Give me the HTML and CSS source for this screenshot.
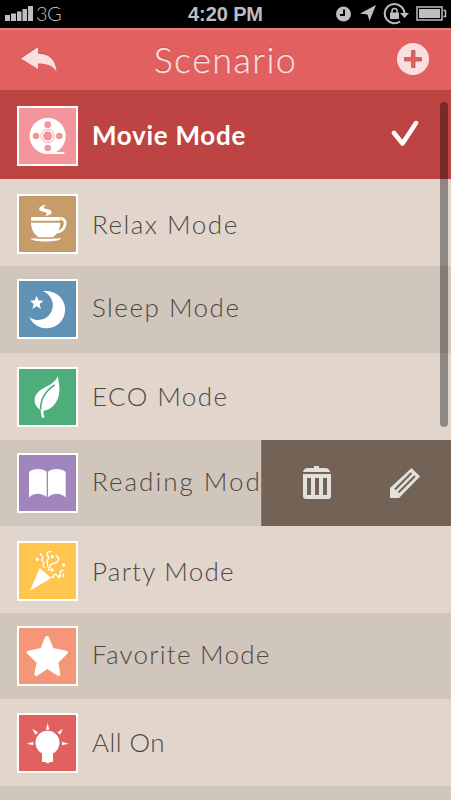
FILE: index.html
```html
<!DOCTYPE html>
<html lang="en">
<head>
    <meta charset="UTF-8">
    <meta name="viewport" content="width=device-width, initial-scale=1.0">
    <title>Scenario</title>
    <link rel="stylesheet" href="styles.css">
</head>
<body>

    <div class="status-bar">
        <svg class="signal" viewBox="0 0 28 16" width="28" height="16">
            <path d="M0 9h5v6H0zM6 7.500h5V15H6zM12 5.500h4.500V15H12zM17.500 3h4.500v12h-4.500zM23 0h5v15h-5z"/>
        </svg>
        <span class="network">3G</span>
        <span class="time">4:20 PM</span>
        <svg class="status-icons" viewBox="0 0 112 24" width="112" height="24">
            <circle cx="7.500" cy="12" r="7.500"/>
            <path class="cut" d="M8 7.500v5.500H4"/>
            <path d="M40 3L33.500 19 31.500 12.500 24 11.500z"/>
            <path class="line" d="M64 19.500A9.700 9.700 0 1 1 65 4.500A9.500 9.500 0 0 1 68.500 11"/>
            <path d="M64 11h9l-4.500 5zM54 10.500h9v6.500h-9z"/>
            <path class="line thin" d="M56 11V9a2.500 2.500 0 0 1 5 0v2"/>
            <path class="line thin" d="M81 5h25v13H81zM107.500 8.500h2v6h-2"/>
            <path d="M83 7h21v9H83z"/>
        </svg>
    </div>

    <header class="header">
        <svg class="back" viewBox="0 0 36 25" width="36" height="25">
            <path d="M0 11.500L17 0v6.500C28 7 34.500 12 35.500 24.500C32 18.500 26 16.500 17 16.500v5.500z"/>
        </svg>
        <h1>Scenario</h1>
        <svg class="add" viewBox="0 0 32 32" width="32" height="32">
            <circle cx="16" cy="16" r="16"/>
            <path d="M14.500 7.500h3.500V14.500h6.500v3.500H18v6.500h-3.500V18H7.500v-3.500h7z"/>
        </svg>
    </header>

    <main class="list">
        <div class="row selected">
            <svg class="tile movie" viewBox="0 0 183 180">
                <circle cx="92" cy="90" r="54"/>
                <path d="M92 144v-8l30 2h20v6z"/>
                <g class="hole">
                    <circle cx="92" cy="56" r="10"/>
                    <circle cx="57" cy="90" r="10"/>
                    <circle cx="127" cy="90" r="10"/>
                    <circle cx="92" cy="126" r="10"/>
                    <circle cx="92" cy="90" r="14"/>
                </g>
                <circle class="ring" cx="92" cy="90" r="20"/>
            </svg>
            <span class="label">Movie Mode</span>
            <svg class="check" viewBox="0 0 28 27" width="28" height="27">
                <path d="M3 13l8.500 10.500L25 3"/>
            </svg>
        </div>
        <div class="row relax">
            <svg class="tile" viewBox="0 0 183 180">
                <path d="M42 69h88v11H42zM42 86h88c0 20-11 37-24 44H66C53 123 42 106 42 86zM41 133c14 2 77 2 91 0c-1 13-90 13-91 0z"/>
                <path class="stroke" stroke-width="8" d="M131 74c20-3 20 36-14 41"/>
                <path d="M88 32c-24 2-29 17-10 21c12 2 14 5 6 13c22-2 28-15 9-20c-14-3-17-6-5-14z"/>
            </svg>
            <span class="label">Relax Mode</span>
        </div>
        <div class="row dark sleep">
            <svg class="tile" viewBox="0 0 183 180">
                <path d="M77 37A56 56 0 1 1 37 114A44 44 0 1 0 77 37z"/>
                <path d="M59 51l6 13 14 1-11 10 4 15-13-8-13 8 4-15-11-10 14-1z"/>
            </svg>
            <span class="label">Sleep Mode</span>
        </div>
        <div class="row eco">
            <svg class="tile" viewBox="0 0 183 180">
                <path d="M122 28C127 55 133 80 117 106C108 121 95 129 80 131C79 139 80 146 83 151L76 153C73 145 71 138 71 129C48 117 47 89 66 73C84 58 111 54 122 28z"/>
                <path class="vein" d="M71 128C70 101 83 72 113 54"/>
            </svg>
            <span class="label">ECO Mode</span>
        </div>
        <div class="row dark reading">
            <svg class="tile" viewBox="0 0 183 180">
                <path d="M36 57C47 46 76 45 89 56v77C77 120 50 118 36 134zM93 56c13-11 42-10 53 1v77C132 118 105 120 93 133z"/>
            </svg>
            <span class="label">Reading Mode</span>
            <div class="actions">
                <svg class="trash" viewBox="0 0 28 33" width="28" height="33">
                    <path d="M11 0h5v2h6c3 0 5 2 5 4H0c0-2 2-4 5-4h6z"/>
                    <path fill-rule="evenodd" d="M0 8h28v22q0 3-3 3H3q-3 0-3-3zM4 12v17h4V12zM12 12v17h4V12zM20 12v17h4V12z"/>
                </svg>
                <svg class="pencil" viewBox="0 0 30 30" width="30" height="30">
                    <path d="M21.500 0L30 8.500 9 30H0V20z"/>
                    <path class="groove" d="M5 21.500L21.500 5M8.500 24.500L25 8"/>
                </svg>
            </div>
        </div>
        <div class="row party">
            <svg class="tile" viewBox="0 0 183 180">
                <path d="M68 81l35 30-64 38z"/>
                <g class="stroke" stroke-width="4">
                    <path d="M71 36c-5 8 12 8 5 17s10 10 4 18s6 6 5 10"/>
                    <path d="M104 32c-16-2-18 7-11 14s-5 10-3 17s4 8 1 15"/>
                    <path d="M116 43c14 8 10 19-3 23s-18 11-17 23"/>
                    <path d="M139 90c-8-4-12 2-9 10s-8 7-11 2s-8-2-9 5s-7-1-8 0"/>
                    <path d="M139 97v12"/>
                </g>
                <circle cx="61" cy="55" r="5"/>
                <circle cx="106" cy="47" r="5"/>
                <circle cx="140" cy="72" r="5"/>
                <circle cx="105" cy="87" r="5"/>
                <circle cx="126" cy="107" r="5"/>
            </svg>
            <span class="label">Party Mode</span>
        </div>
        <div class="row dark favorite">
            <svg class="tile" viewBox="0 0 183 180">
                <path d="M84 34q6-8 12 0l13 32 39 8q8 2 3 9l-27 27 6 34q0 8-8 5l-31-20-30 20q-9 3-9-5l7-34-28-27q-5-7 3-9l37-8z"/>
            </svg>
            <span class="label">Favorite Mode</span>
        </div>
        <div class="row all-on">
            <svg class="tile" viewBox="0 0 183 180">
                <path d="M75 121A36 36 0 1 1 108 121V147h-9q-7 8-14 0h-10z"/>
                <path d="M92 30l5 20H87zM46 47l17 11-8 7zM138 47l-9 18-8-7zM29 92l20-6v11zM155 92l-20-6v11z"/>
            </svg>
            <span class="label">All On</span>
        </div>
        <div class="row dark last"></div>
        <div class="scrollbar"></div>
    </main>

</body>
</html>
```
FILE: styles.css
```css
body {
    margin: 0;
    background: #e2d6cc;
    font-family: Lato, "Open Sans", sans-serif;
    font-weight: 300;
    color: #4f4843;
}

svg {
    display: block;
    flex: none;
}

/* status bar */
.status-bar {
    display: grid;
    grid-template-columns: 36px 1fr auto 1fr;
    align-items: start;
    height: 28px;
    background: #000;
    color: #bebebe;
    fill: #bebebe;
}

.signal {
    margin: 6px 0 0 5px;
}

.network {
    font-size: 20px;
    line-height: 27px;
    letter-spacing: -0.5px;
}

.time {
    font: bold 20px/28px "Liberation Sans", Arial, sans-serif;
    margin-left: -36px;
    letter-spacing: -0.1px;
}

.status-icons {
    justify-self: end;
    margin: 2px 3px 0 0;
}

.status-icons .cut {
    fill: none;
    stroke: #000;
    stroke-width: 2;
}

.status-icons .line {
    fill: none;
    stroke: #bebebe;
    stroke-width: 2;
}

.status-icons .thin {
    stroke-width: 1.5;
}

/* header */
.header {
    display: flex;
    align-items: flex-start;
    justify-content: space-between;
    box-sizing: border-box;
    height: 62px;
    padding: 0 22px 0 21px;
    background: #e26060;
    border-top: 2px solid #e77b79;
    fill: #f9dfdf;
}

.header h1 {
    margin: 0 0 0 -3px;
    font-size: 36px;
    font-weight: 300;
    line-height: 58px;
    letter-spacing: 1.4px;
    color: #f9dfdf;
    -webkit-text-stroke: 0.3px #f9dfdf;
    text-shadow: 0 -1px 1px rgba(130, 30, 30, 0.4);
}

.back {
    margin-top: 17px;
    filter: drop-shadow(0 -1px 0 rgba(150, 40, 40, 0.35));
}

.add {
    margin-top: 13px;
}

.add path {
    fill: #dc6262;
    stroke: #b64d4d;
    stroke-width: 0.7;
}

/* list */
.list {
    position: relative;
}

.row {
    display: flex;
    align-items: flex-start;
    position: relative;
    box-sizing: border-box;
    height: 87px;
    padding: 15px 0 0 17px;
    background: #e2d6cc;
    --tile: #c69c6b;
}

.row.dark {
    background: #d1c6bb;
}

.row.selected {
    height: 89px;
    padding-top: 16px;
    background: #bd4442;
    --tile: #f4959c;
}

.row.last {
    height: 14px;
    padding: 0;
}

.tile {
    width: 61px;
    height: 60px;
    background: var(--tile);
    box-shadow: inset 0 0 0 2px #fff;
    fill: #fff;
}

.label {
    margin-left: 14px;
    font-size: 26px;
    line-height: 60px;
    letter-spacing: 1.5px;
    white-space: nowrap;
}

.selected .label {
    margin-top: -1px;
    font-weight: 700;
    letter-spacing: 0.7px;
    color: #fff;
}

.hole {
    fill: var(--tile);
}

.ring,
.vein {
    fill: none;
    stroke: var(--tile);
    stroke-width: 2.5;
}

.vein {
    stroke-width: 5;
}

.stroke {
    fill: none;
    stroke: #fff;
}

.check {
    margin: 14px 32px 0 auto;
    fill: none;
    stroke: #fff;
    stroke-width: 4.5;
    stroke-linecap: round;
    stroke-linejoin: round;
}

.sleep {
    padding-top: 13px;
    --tile: #5f92b4;
}

.eco {
    padding-top: 14px;
    --tile: #4dae7c;
}

.reading {
    height: 86px;
    padding-top: 13px;
    --tile: #a186be;
}

.party {
    --tile: #ffc54f;
}

.favorite {
    height: 86px;
    padding-top: 13px;
    --tile: #f59678;
}

.all-on {
    padding-top: 14px;
    --tile: #e26060;
}

.sleep .label,
.reading .label,
.favorite .label {
    margin-top: -2px;
}

.eco .label,
.all-on .label {
    margin-top: -1px;
}

.eco .label {
    letter-spacing: 1.4px;
}

.reading .label {
    letter-spacing: 2px;
}

.party .label,
.favorite .label {
    letter-spacing: 1.25px;
}

.all-on .label {
    letter-spacing: 0.5px;
}

/* swipe actions over the row */
.actions {
    position: absolute;
    top: 0;
    right: 0;
    bottom: 0;
    width: 190px;
    display: flex;
    align-items: flex-start;
    gap: 59px;
    box-sizing: border-box;
    padding: 26px 0 0 41px;
    background: #736357;
    border-left: 1px solid #897a6e;
    fill: #e4e0dc;
}

.pencil {
    margin-top: 2px;
}

.groove {
    stroke: #736357;
    stroke-width: 2;
}

.scrollbar {
    position: absolute;
    top: 12px;
    right: 3px;
    width: 8px;
    height: 325px;
    border-radius: 4px;
    background: rgba(0, 0, 0, 0.37);
}
```
